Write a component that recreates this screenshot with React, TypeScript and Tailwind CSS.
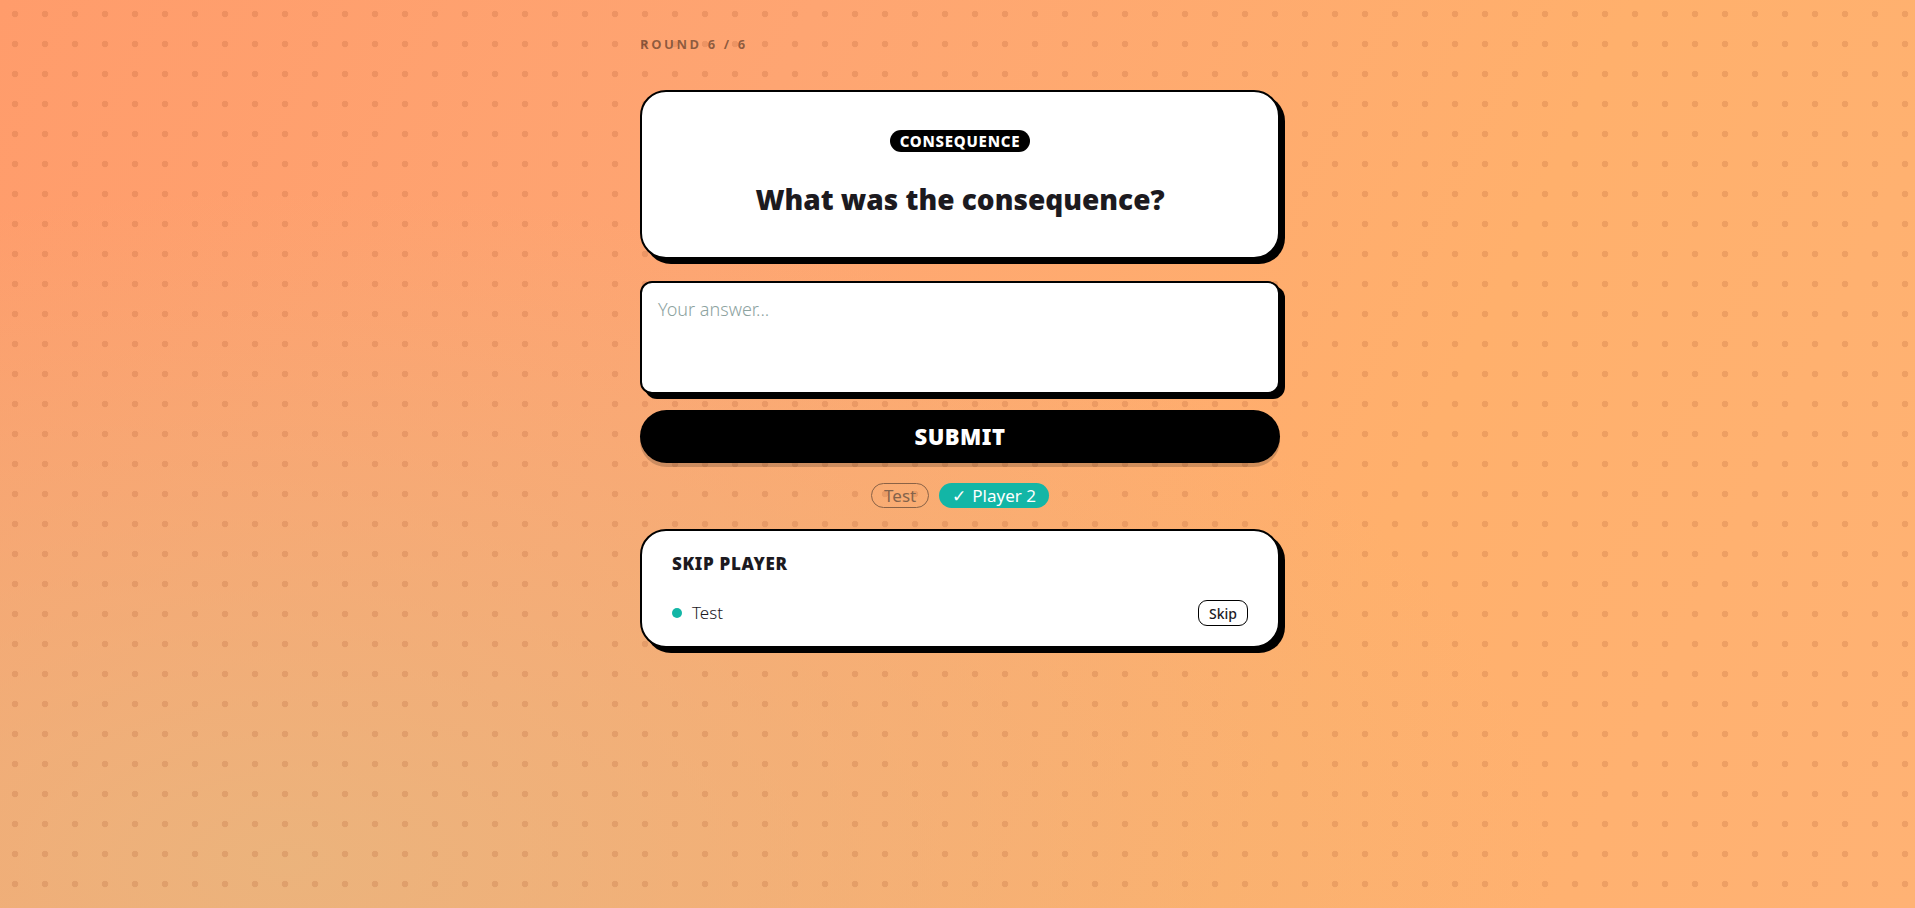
import React, { useState } from 'react';

const players = [
  { name: 'Test', done: false },
  { name: 'Player 2', done: true },
];

export default function App() {
  const [answer, setAnswer] = useState('');

  return (
    <div
      className="min-h-screen w-full bg-[linear-gradient(115deg,#ff9c6b_0%,#fea572_35%,#ffb06c_70%,#ffb274_100%)]"
      style={{ fontFamily: '"Noto Sans", "Open Sans", sans-serif' }}
    >
      <div className="min-h-screen w-full bg-[radial-gradient(ellipse_at_15%_95%,rgba(232,182,126,0.85)_0%,rgba(232,182,126,0)_55%)]">
        <div className="flex min-h-screen w-full justify-center bg-[radial-gradient(circle,rgba(170,85,45,0.2)_3px,transparent_3.6px)] bg-[length:30px_30px] bg-[position:0px_-1px] pl-[5px]">
          <div className="w-[640px] pt-[34px]">
            {/* round counter */}
            <div className="text-[13px] font-bold uppercase leading-5 tracking-[0.2em] text-black/45">
              Round 6 / 6
            </div>

            {/* prompt card */}
            <div className="mt-9 flex flex-col items-center rounded-[26px] border-2 border-black bg-white px-10 pb-10 pt-[38px] shadow-[5px_5px_0_0_#000]">
              <span className="flex h-[22px] items-center rounded-full bg-black px-[10px] text-[15px] font-extrabold uppercase tracking-wider text-white">
                Consequence
              </span>
              <h1 className="mt-[29px] text-[28px] font-black leading-9 text-[#1c1a1f]">
                What was the consequence?
              </h1>
            </div>

            {/* answer */}
            <textarea
              value={answer}
              onChange={(e) => setAnswer(e.target.value)}
              placeholder="Your answer..."
              className="mt-[22px] block h-[113px] w-full resize-none rounded-[12px] border-2 border-black bg-white px-4 py-3 text-[18px] font-light leading-7 text-[#1c1a1f] shadow-[5px_5px_0_0_#000] outline-none placeholder:text-[#8da39f]"
            />

            <button className="mt-4 flex h-[53px] w-full items-center justify-center rounded-full bg-black text-[22px] font-black uppercase tracking-[0.02em] text-white shadow-[0_4px_0_0_rgba(0,0,0,0.18)]">
              Submit
            </button>

            {/* who has answered */}
            <div className="mt-5 flex justify-center gap-[10px]">
              {players.map((p) =>
                p.done ? (
                  <span
                    key={p.name}
                    className="flex h-[25px] items-center gap-1.5 rounded-full bg-[#13b6a6] px-[13px] text-[17px] text-white"
                  >
                    <span>✓</span>
                    {p.name}
                  </span>
                ) : (
                  <span
                    key={p.name}
                    className="flex h-[25px] items-center rounded-full border-[1.5px] border-[#8a6246] px-[12px] text-[17px] text-[#84634b]"
                  >
                    {p.name}
                  </span>
                )
              )}
            </div>

            {/* skip player */}
            <div className="mt-[21px] rounded-[26px] border-2 border-black bg-white px-[30px] pb-[20px] pt-[21px] shadow-[5px_5px_0_0_#000]">
              <h2 className="text-[17px] font-black uppercase leading-6 tracking-[0.04em] text-[#1c1a1f]">
                Skip Player
              </h2>
              <div className="mt-6 flex items-center justify-between">
                <div className="flex items-center gap-[10px]">
                  <span className="h-[10px] w-[10px] rounded-full bg-[#13b6a6]" />
                  <span className="text-[17px] font-light text-[#1c1a1f]">Test</span>
                </div>
                <button className="flex h-[26px] items-center rounded-[9px] border-[1.5px] border-black px-[10px] text-[14px] font-medium text-[#1c1a1f]">
                  Skip
                </button>
              </div>
            </div>
          </div>
        </div>
      </div>
    </div>
  );
}
